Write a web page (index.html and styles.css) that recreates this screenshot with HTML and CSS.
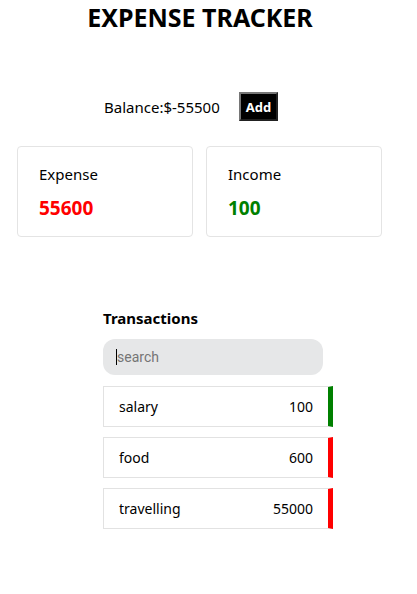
FILE: index.html
```html
<!DOCTYPE html>
<html>
<head>
<meta charset="utf-8">
<link rel="stylesheet" href="styles.css">
</head>
<body>
<div class="app">
  <h1 class="title">EXPENSE TRACKER</h1>
  <div class="balance-row">
    <span class="balance">Balance:$-55500</span>
    <button class="add-btn">Add</button>
  </div>
  <div class="cards">
    <div class="card">
      <div class="card-label">Expense</div>
      <div class="card-value expense">55600</div>
    </div>
    <div class="card">
      <div class="card-label">Income</div>
      <div class="card-value income">100</div>
    </div>
  </div>
  <div class="transactions">
    <h3 class="tx-title">Transactions</h3>
    <div class="search"><span class="caret"></span><span class="placeholder">search</span></div>
    <div class="tx-list">
      <div class="tx credit"><span>salary</span><span>100</span></div>
      <div class="tx debit"><span>food</span><span>600</span></div>
      <div class="tx debit"><span>travelling</span><span>55000</span></div>
    </div>
  </div>
</div>
</body>
</html>
```
FILE: styles.css
```css
* { box-sizing: border-box; }
body {
  margin: 0;
  font-family: "Noto Sans", "Open Sans", sans-serif;
  color: #000;
  background: #fff;
}
.app {
  width: 400px;
}
.title {
  margin: 0;
  text-align: center;
  font-size: 25px;
  font-weight: 700;
  line-height: 34px;
}
.balance-row {
  display: flex;
  align-items: center;
  gap: 19px;
  margin-top: 58px;
  padding-left: 104px;
}
.balance {
  font-size: 15px;
}
.add-btn {
  background: #000;
  color: #fff;
  font-family: inherit;
  font-weight: 700;
  font-size: 13px;
  border: 2px outset #767676;
  height: 29px;
  padding: 0 5px;
}
.cards {
  display: flex;
  gap: 13px;
  padding: 0 17px;
  margin-top: 25px;
}
.card {
  width: 176px;
  height: 91px;
  border: 1px solid #e4e4e4;
  border-radius: 4px;
  padding: 17px 21px;
}
.card-label {
  font-size: 15px;
  line-height: 20px;
}
.card-value {
  font-size: 19px;
  font-weight: 700;
  margin-top: 12px;
  line-height: 24px;
}
.expense { color: #ff0000; }
.income { color: #008000; }
.transactions {
  padding-left: 103px;
  margin-top: 71px;
}
.tx-title {
  margin: 0;
  font-size: 15px;
  font-weight: 700;
  line-height: 20px;
}
.search {
  margin-top: 11px;
  width: 220px;
  height: 36px;
  background: #e6e7e8;
  border-radius: 12px;
  display: flex;
  align-items: center;
  padding-left: 13px;
  font-size: 14px;
}
.caret {
  width: 1px;
  height: 16px;
  background: #000;
}
.placeholder {
  color: #757575;
  font-family: Roboto, sans-serif;
}
.tx-list {
  margin-top: 11px;
  display: flex;
  flex-direction: column;
  gap: 10px;
}
.tx {
  width: 230px;
  height: 41px;
  border: 1px solid #e2e2e2;
  border-right: 5px solid;
  display: flex;
  justify-content: space-between;
  align-items: center;
  padding: 0 15px;
  font-size: 14px;
}
.credit { border-right-color: #008000; }
.debit { border-right-color: #ff0000; }
```
